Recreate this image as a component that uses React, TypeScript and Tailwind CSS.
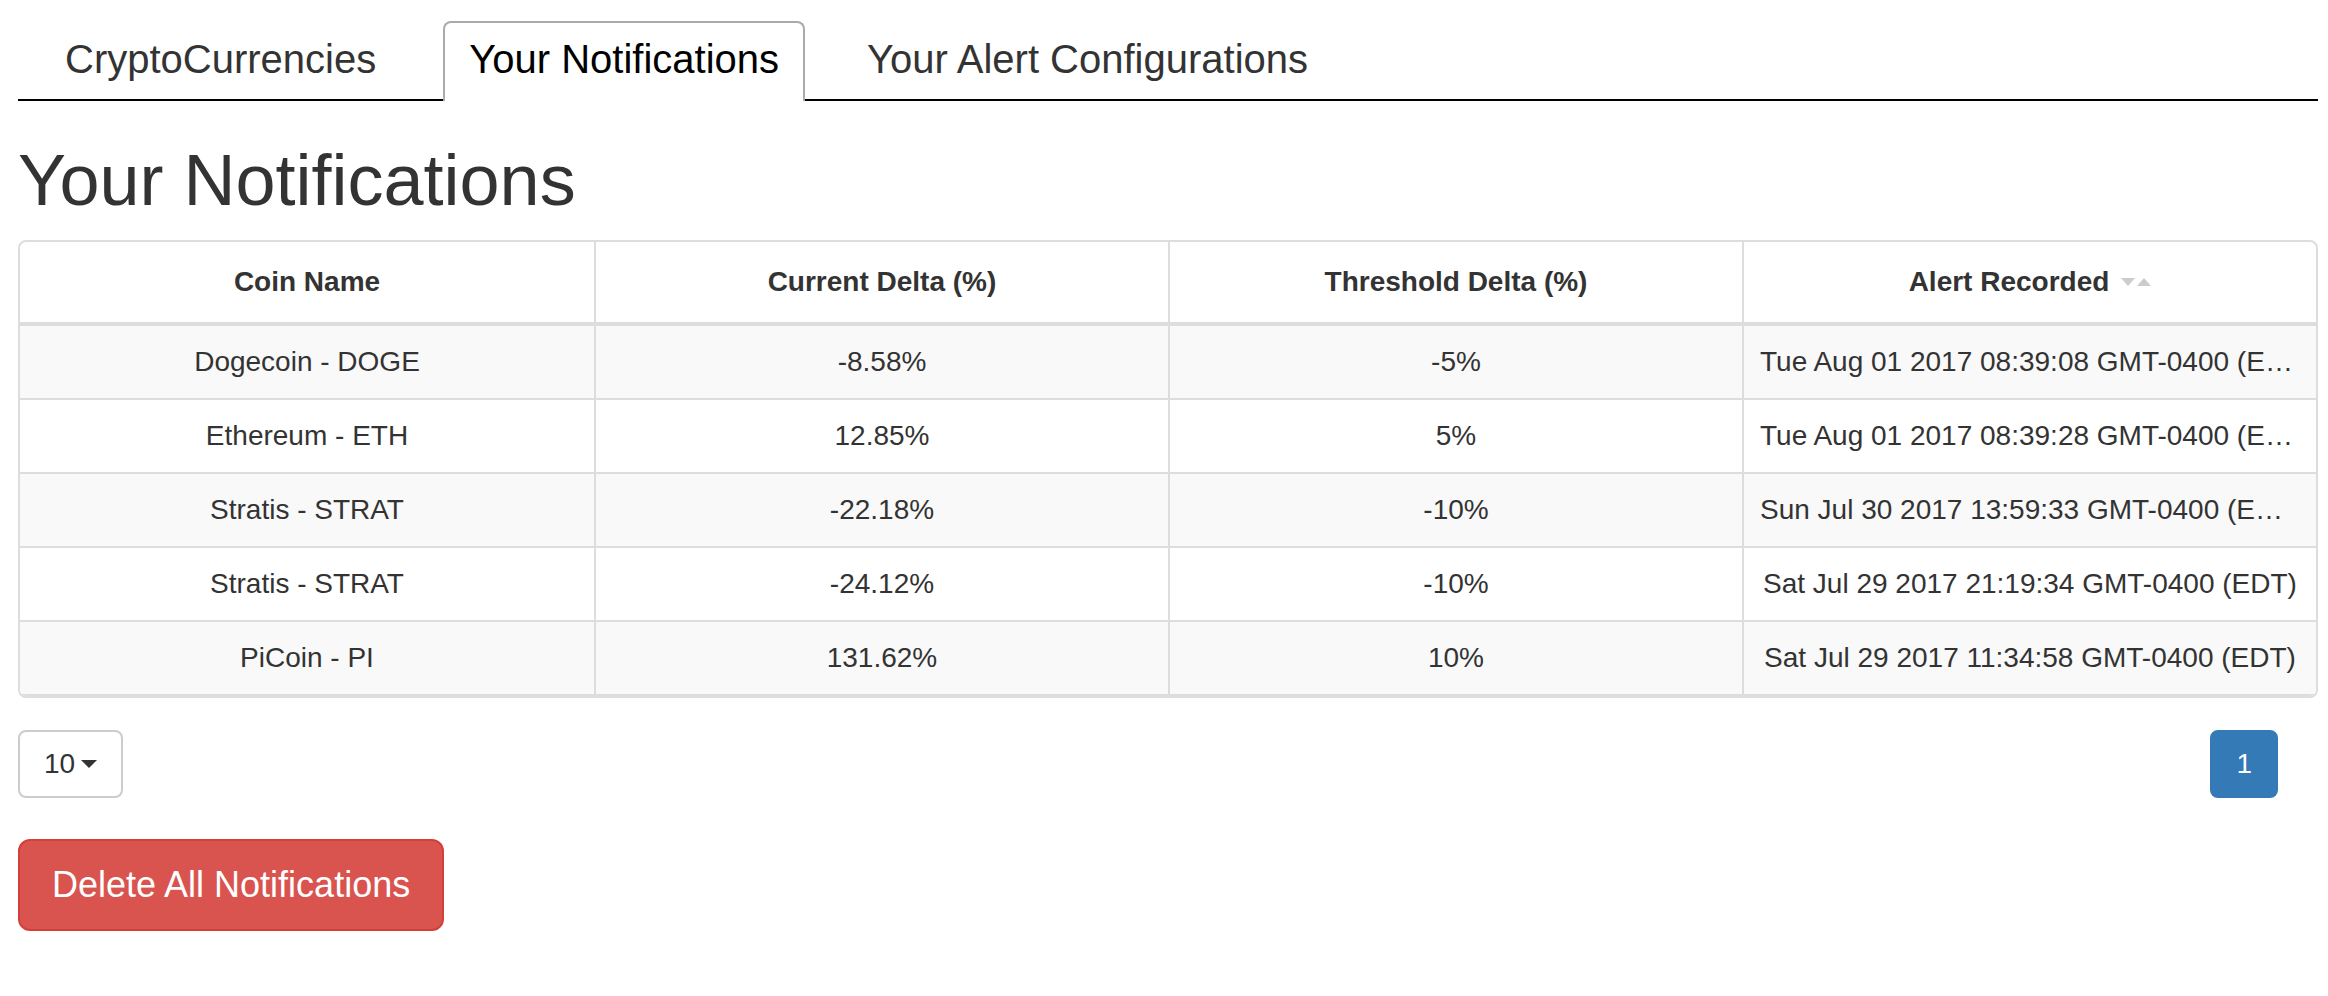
import React from "react";

type Notification = {
  coin: string;
  current: string;
  threshold: string;
  recorded: string;
};

const notifications: Notification[] = [
  { coin: "Dogecoin - DOGE", current: "-8.58%", threshold: "-5%", recorded: "Tue Aug 01 2017 08:39:08 GMT-0400 (EDT)" },
  { coin: "Ethereum - ETH", current: "12.85%", threshold: "5%", recorded: "Tue Aug 01 2017 08:39:28 GMT-0400 (EDT)" },
  { coin: "Stratis - STRAT", current: "-22.18%", threshold: "-10%", recorded: "Sun Jul 30 2017 13:59:33 GMT-0400 (EDT)" },
  { coin: "Stratis - STRAT", current: "-24.12%", threshold: "-10%", recorded: "Sat Jul 29 2017 21:19:34 GMT-0400 (EDT)" },
  { coin: "PiCoin - PI", current: "131.62%", threshold: "10%", recorded: "Sat Jul 29 2017 11:34:58 GMT-0400 (EDT)" },
];

const tabs = [
  { label: "CryptoCurrencies", margin: "ml-0" },
  { label: "Your Notifications", margin: "ml-[41px]" },
  { label: "Your Alert Configurations", margin: "ml-[36px]" },
];

function SortCaret() {
  return (
    <span className="ml-[12px] inline-flex items-center gap-[2px]">
      <span className="inline-block h-0 w-0 border-x-[7px] border-t-[8px] border-x-transparent border-t-[#ccc]" />
      <span className="inline-block h-0 w-0 border-x-[7px] border-b-[8px] border-x-transparent border-b-[#ccc]" />
    </span>
  );
}

export default function App() {
  const active = 1;

  return (
    <div className="min-h-screen bg-white pl-[18px] pr-[10px] pt-[21px] font-['Liberation_Sans',Arial,sans-serif] text-[#333]">
      <ul className="flex border-b-2 border-black pl-[21px]">
        {tabs.map((tab, i) => (
          <li
            key={tab.label}
            className={`${tab.margin} mb-[-2px] h-[80px] whitespace-nowrap rounded-t-[8px] border-2 border-b-0 px-[24px] pt-[8px] text-[40px] leading-[57px] ${
              i === active ? "border-[#aaa] bg-white text-black" : "border-transparent text-[#333]"
            }`}
          >
            {tab.label}
          </li>
        ))}
      </ul>

      <h1 className="mb-[20px] mt-[40px] text-[72px] font-normal leading-[1.1]">Your Notifications</h1>

      <div className="overflow-hidden rounded-[8px] border-2 border-[#ddd]">
        <div className="grid h-[84px] grid-cols-4 border-b-4 border-[#ddd] text-[28px] font-bold">
          <div className="flex items-center justify-center">Coin Name</div>
          <div className="flex items-center justify-center border-l-2 border-[#ddd]">Current Delta (%)</div>
          <div className="flex items-center justify-center border-l-2 border-[#ddd]">Threshold Delta (%)</div>
          <div className="flex items-center justify-center border-l-2 border-[#ddd]">
            Alert Recorded
            <SortCaret />
          </div>
        </div>
        {notifications.map((n, i) => (
          <div
            key={i}
            className={`grid grid-cols-4 text-[28px] leading-[72px] ${i % 2 === 0 ? "bg-[#f9f9f9]" : "bg-white"} ${
              i > 0 ? "border-t-2 border-[#ddd]" : ""
            } ${i === notifications.length - 1 ? "border-b-2 border-[#ddd]" : ""}`}
          >
            <div className="truncate px-[16px] text-center">{n.coin}</div>
            <div className="truncate border-l-2 border-[#ddd] px-[16px] text-center">{n.current}</div>
            <div className="truncate border-l-2 border-[#ddd] px-[16px] text-center">{n.threshold}</div>
            <div className="truncate border-l-2 border-[#ddd] px-[16px] text-center">{n.recorded}</div>
          </div>
        ))}
      </div>

      <div className="mt-[32px] flex items-start justify-between">
        <button className="flex items-center rounded-[8px] border-2 border-[#ccc] bg-white px-[24px] py-[12px] text-[28px] leading-[40px] text-[#333]">
          10
          <span className="ml-[6px] inline-block h-0 w-0 border-x-[8px] border-t-[8px] border-x-transparent border-t-[#333]" />
        </button>
        <button className="mr-[40px] rounded-[8px] border-2 border-[#337ab7] bg-[#337ab7] px-[24px] py-[12px] text-[28px] leading-[40px] text-white">
          1
        </button>
      </div>

      <button className="mt-[41px] rounded-[12px] border-2 border-[#d43f3a] bg-[#d9534f] px-[32px] py-[20px] text-[36px] leading-[48px] text-white">
        Delete All Notifications
      </button>
    </div>
  );
}
